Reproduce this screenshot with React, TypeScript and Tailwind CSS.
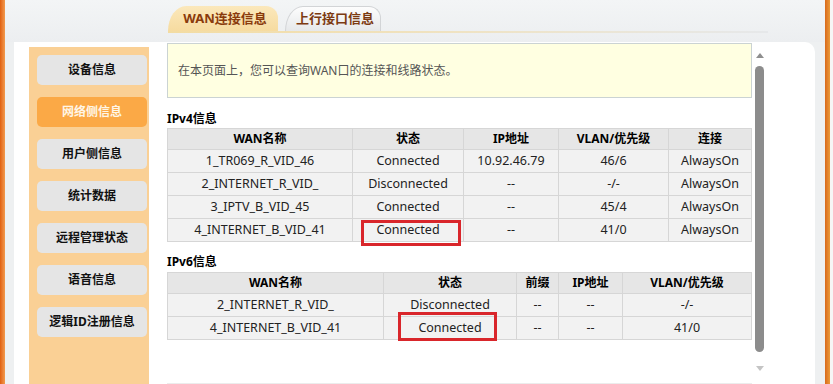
const menu = [
  "设备信息",
  "网络侧信息",
  "用户侧信息",
  "统计数据",
  "远程管理状态",
  "语音信息",
  "逻辑ID注册信息",
];

const ipv4Rows = [
  ["1_TR069_R_VID_46", "Connected", "10.92.46.79", "46/6", "AlwaysOn"],
  ["2_INTERNET_R_VID_", "Disconnected", "--", "-/-", "AlwaysOn"],
  ["3_IPTV_B_VID_45", "Connected", "--", "45/4", "AlwaysOn"],
  ["4_INTERNET_B_VID_41", "Connected", "--", "41/0", "AlwaysOn"],
];

const ipv6Rows = [
  ["2_INTERNET_R_VID_", "Disconnected", "--", "--", "-/-"],
  ["4_INTERNET_B_VID_41", "Connected", "--", "--", "41/0"],
];

export default function App() {
  return (
    <div
      className="flex h-[384px] w-[833px] overflow-hidden bg-[#eef0f1]"
      style={{ fontFamily: '"Noto Sans", "Noto Sans CJK SC", sans-serif' }}
    >
      {/* left edge */}
      <div className="w-[5px] bg-gradient-to-r from-[#e0600c] to-[#f29a4c]" />

      <div className="flex w-[820px] flex-col">
        {/* Tabs */}
        <div className="h-[42px] bg-gradient-to-b from-[#f3f5f6] to-[#eceef0] pl-[163px] pt-[6px]">
          <div className="flex h-[25px] items-stretch gap-[7px]">
            <div className="flex w-[110px] items-center justify-center rounded-tl-[18px_25px] rounded-tr-[12px] bg-gradient-to-b from-[#fbe8bb] to-[#f6dba0] pl-[4px] text-[13px] font-bold text-[#8a3b0c]">
              WAN连接信息
            </div>
            <div className="flex w-[96px] items-center justify-center rounded-tl-[18px_25px] rounded-tr-[12px] border border-b-0 border-[#d2d4d6] bg-gradient-to-b from-[#fdfdfd] to-[#e6e8ea] pl-[4px] text-[13px] font-bold text-[#7c3a12]">
              上行接口信息
            </div>
          </div>
          <div className="h-[2px] w-[600px] bg-gradient-to-r from-[#f3dca2] via-[#efe3c4] to-[#e6e8ea]" />
        </div>

        {/* Panel */}
        <div className="ml-[9px] flex w-[801px] flex-1 rounded-tr-[10px] bg-white">
          {/* Sidebar */}
          <div className="ml-[15px] mt-[5px] flex w-[120px] flex-col gap-[12px] bg-[#fad095] pl-[8px] pt-[8px]">
            {menu.map((item, i) => (
              <div
                key={item}
                className={`flex h-[30px] w-[110px] items-center justify-center rounded-[5px] text-[12px] font-bold ${
                  i === 1
                    ? "bg-[#fba946] text-[#fff6e6]"
                    : "bg-[#e5e5e5] text-[#111]"
                }`}
              >
                {item}
              </div>
            ))}
          </div>

          {/* Content */}
          <div className="ml-[18px] w-[585px] border-b border-[#ececec] pt-[1px] text-[12.5px] text-[#222]">
            <div className="flex h-[55px] items-center border border-[#cbd3d3] bg-[#ffffe1] pl-[10px] text-[12px] text-[#555]">
              在本页面上，您可以查询WAN口的连接和线路状态。
            </div>

            <div className="mt-[13px] h-[17px] text-[12px] font-bold leading-[15px] text-black">
              IPv4信息
            </div>
            <table className="w-[584px] table-fixed border-collapse text-center">
              <colgroup>
                <col className="w-[185px]" />
                <col className="w-[111px]" />
                <col className="w-[95px]" />
                <col className="w-[110px]" />
                <col className="w-[83px]" />
              </colgroup>
              <thead>
                <tr className="h-[21px] bg-[#e6e6e6] text-[12px] font-bold text-black">
                  <th className="border border-[#d6d6d6] p-0">WAN名称</th>
                  <th className="border border-[#d6d6d6] p-0">状态</th>
                  <th className="border border-[#d6d6d6] p-0">IP地址</th>
                  <th className="border border-[#d6d6d6] p-0">VLAN/优先级</th>
                  <th className="border border-[#d6d6d6] p-0">连接</th>
                </tr>
              </thead>
              <tbody>
                {ipv4Rows.map((row, r) => (
                  <tr key={r} className="h-[23px] bg-[#f2f2f2]">
                    {row.map((cell, c) => (
                      <td
                        key={c}
                        className="relative border border-[#d6d6d6] p-0 leading-[20px]"
                      >
                        {cell}
                        {r === 3 && c === 1 && (
                          <span className="absolute left-[8px] top-[1px] h-[26px] w-[100px] border-[3px] border-[#d9262b]" />
                        )}
                      </td>
                    ))}
                  </tr>
                ))}
              </tbody>
            </table>

            <div className="mt-[12px] h-[18px] text-[12px] font-bold leading-[15px] text-black">
              IPv6信息
            </div>
            <table className="w-[584px] table-fixed border-collapse text-center">
              <colgroup>
                <col className="w-[216px]" />
                <col className="w-[133px]" />
                <col className="w-[42px]" />
                <col className="w-[64px]" />
                <col className="w-[129px]" />
              </colgroup>
              <thead>
                <tr className="h-[21px] bg-[#e6e6e6] text-[12px] font-bold text-black">
                  <th className="border border-[#d6d6d6] p-0">WAN名称</th>
                  <th className="border border-[#d6d6d6] p-0">状态</th>
                  <th className="border border-[#d6d6d6] p-0">前缀</th>
                  <th className="border border-[#d6d6d6] p-0">IP地址</th>
                  <th className="border border-[#d6d6d6] p-0">VLAN/优先级</th>
                </tr>
              </thead>
              <tbody>
                {ipv6Rows.map((row, r) => (
                  <tr key={r} className="h-[23px] bg-[#f2f2f2]">
                    {row.map((cell, c) => (
                      <td
                        key={c}
                        className="relative border border-[#d6d6d6] p-0 leading-[20px]"
                      >
                        {cell}
                        {r === 1 && c === 1 && (
                          <span className="absolute left-[14px] top-[-5px] h-[29px] w-[99px] border-[3px] border-[#d9262b]" />
                        )}
                      </td>
                    ))}
                  </tr>
                ))}
              </tbody>
            </table>
          </div>

          {/* Scrollbar */}
          <div className="ml-[1px] flex w-[13px] flex-col items-center pt-[11px]">
            <div className="h-0 w-0 border-x-[4px] border-b-[5px] border-x-transparent border-b-[#8e8e8e]" />
            <div className="mt-[8px] h-[286px] w-[9px] rounded-full bg-[#8c8c8c]" />
            <div className="mt-[14px] h-0 w-0 border-x-[4px] border-t-[5px] border-x-transparent border-t-[#c4c4c4]" />
          </div>
        </div>
      </div>

      {/* right edge */}
      <div className="w-[5px] bg-gradient-to-r from-[#d8691a] to-[#eb9a3a]" />
      <div className="w-[3px] bg-[#f6f6f6]" />
    </div>
  );
}
